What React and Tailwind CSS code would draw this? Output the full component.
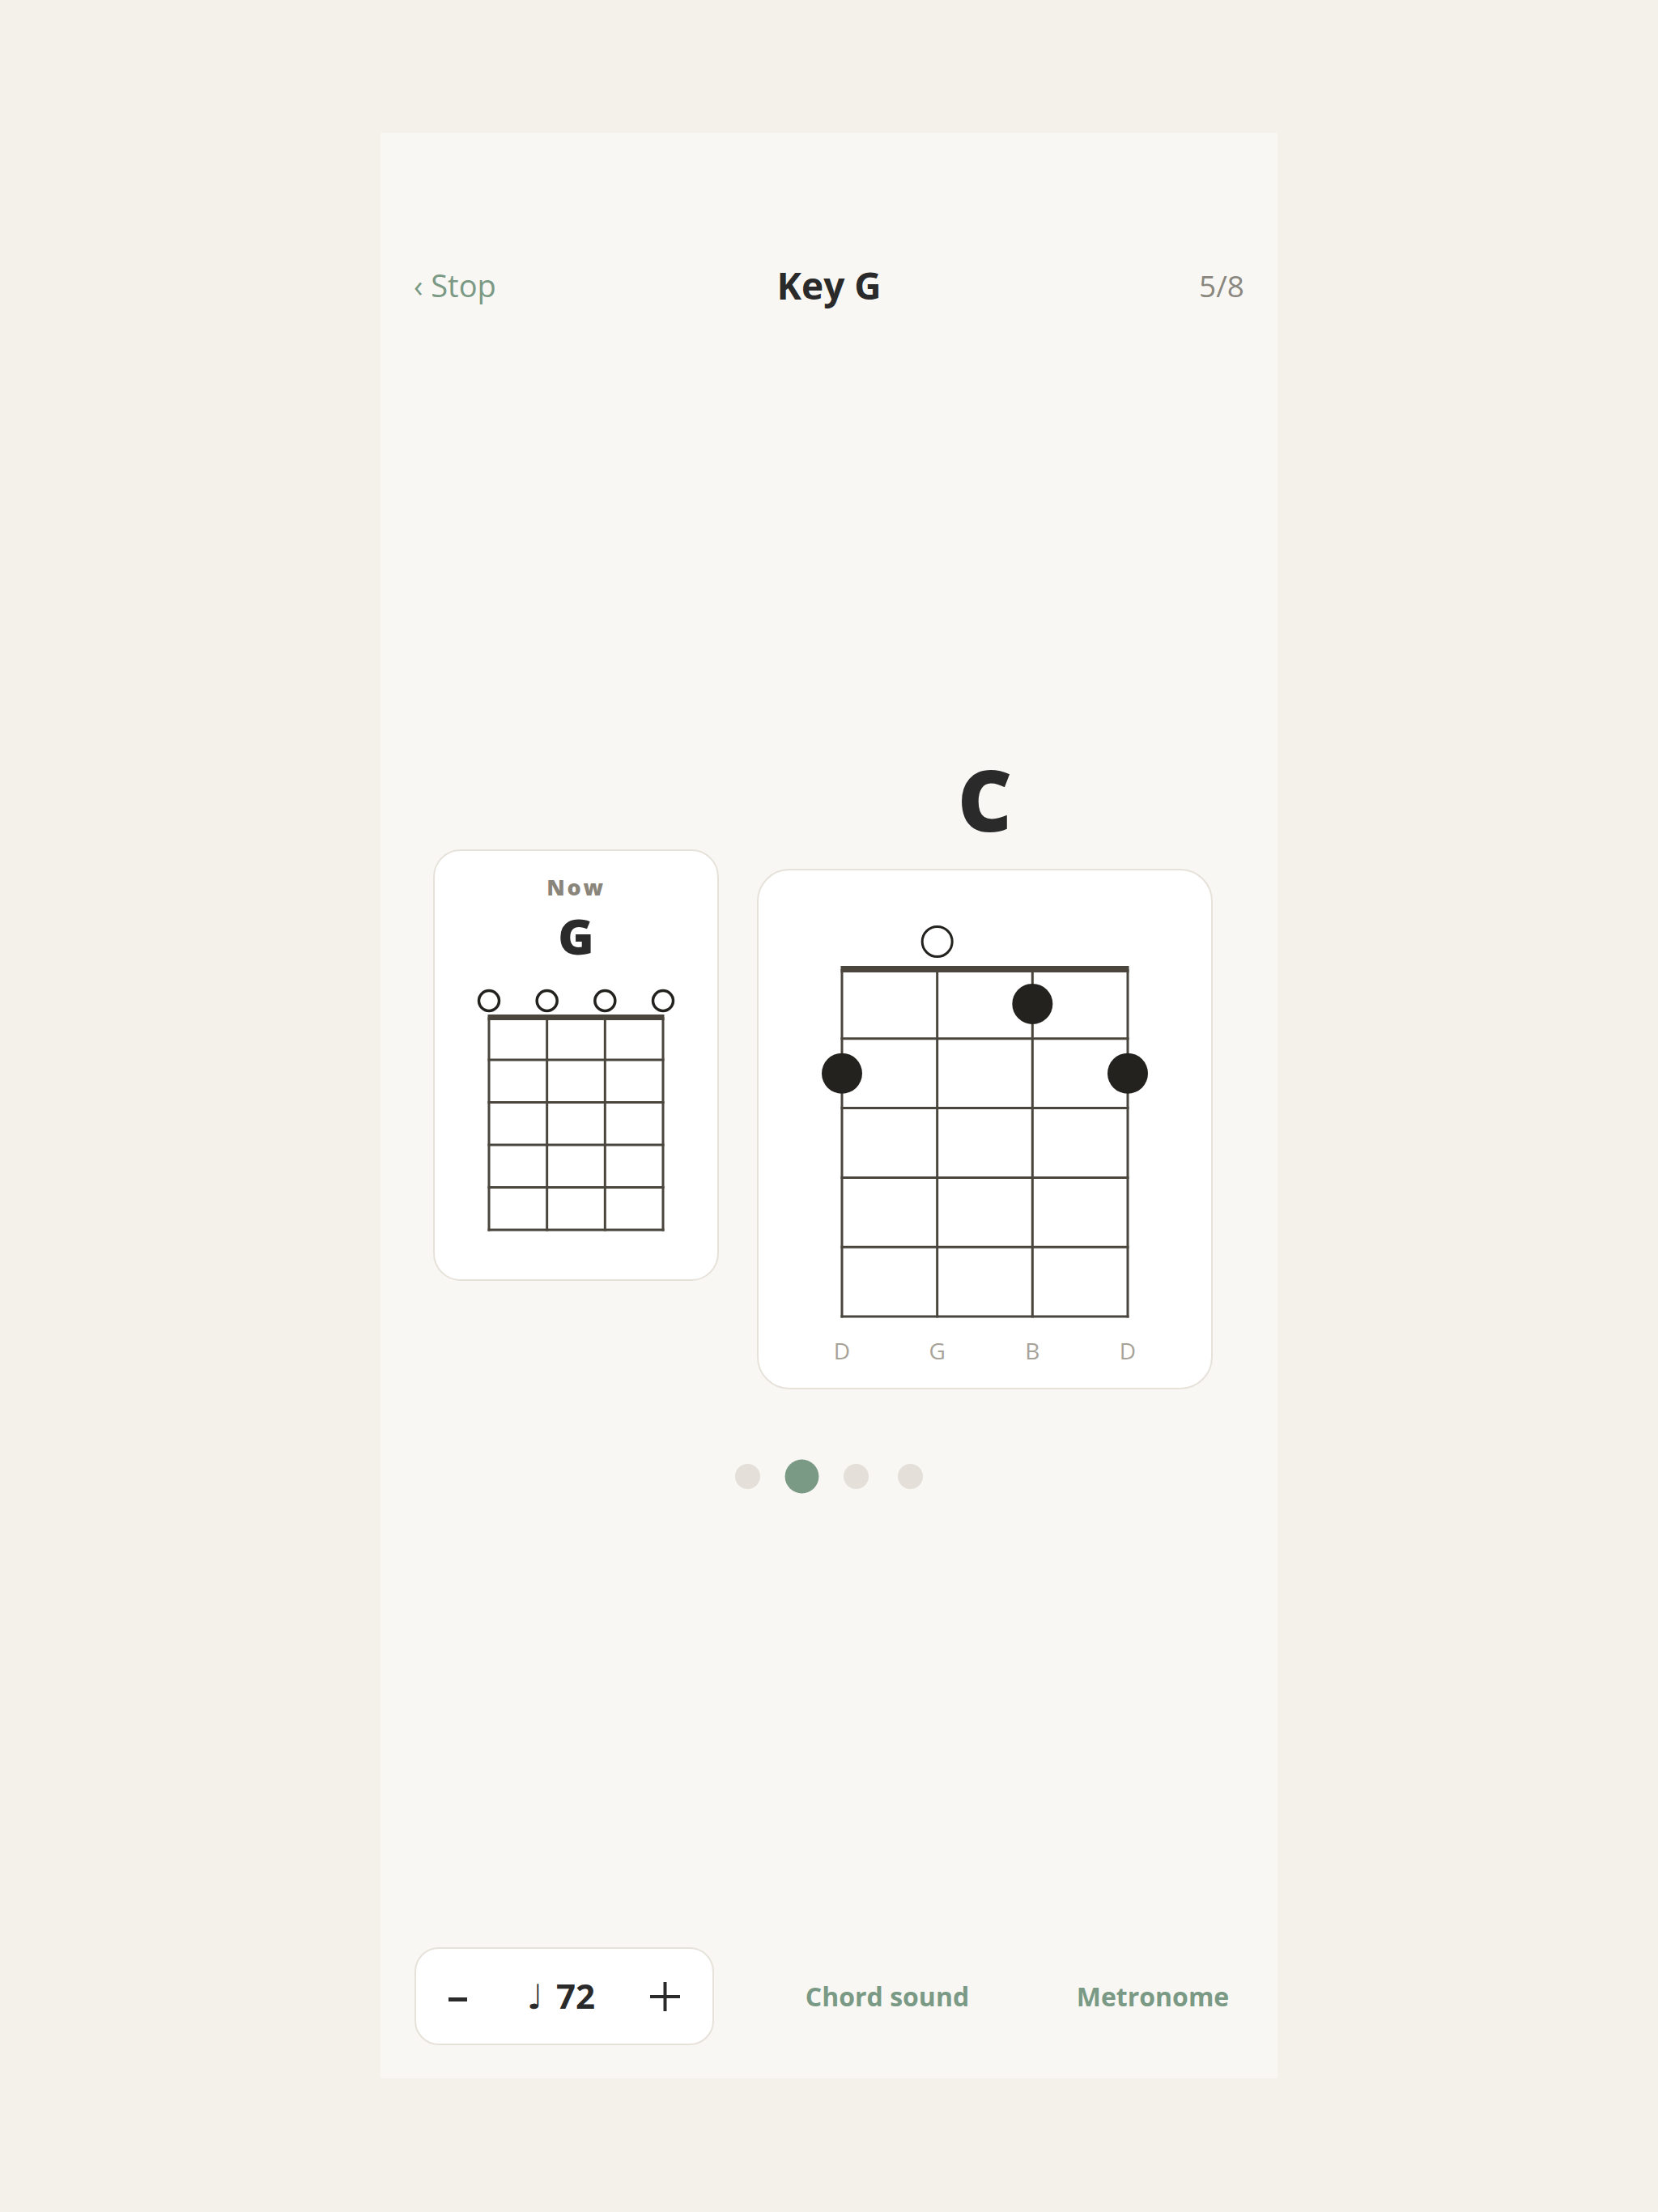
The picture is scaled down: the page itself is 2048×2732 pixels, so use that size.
import React from 'react';

const INK = '#4a463e';
const DOT = '#23221e';

// Ukulele fretboard drawing; xs = string x positions, top = y where strings start
const Fretboard = ({ w, h, xs, top, gap, nutY, nutH, openY, openR, openW, open = [], dots = [], dotR }) => {
    const bottom = top + gap * 5;
    return (
        <svg width={w} height={h} viewBox={`0 0 ${w} ${h}`} className="block">
            {[1, 2, 3, 4, 5].map(k => (
                <line key={k} x1={xs[0] - 1.5} x2={xs[3] + 1.5} y1={top + gap * k} y2={top + gap * k} stroke={INK} strokeWidth="3" />
            ))}
            {xs.map((x, i) => (
                <line key={i} x1={x} x2={x} y1={top} y2={bottom + 1.5} stroke={INK} strokeWidth="3" />
            ))}
            <rect x={xs[0] - 1.5} y={nutY} width={xs[3] - xs[0] + 3} height={nutH} fill={INK} />
            {open.map(i => (
                <circle key={i} cx={xs[i]} cy={openY} r={openR} fill="#fff" stroke={DOT} strokeWidth={openW} />
            ))}
            {dots.map(([s, f]) => (
                <circle key={s} cx={xs[s]} cy={top + gap * (f - 0.5)} r={dotR} fill={DOT} />
            ))}
        </svg>
    );
};

const App = () => {
    const dots = [false, true, false, false];

    return (
        <div className="min-h-[2732px] bg-[#f4f1ea] pt-[164px] font-['Open_Sans',sans-serif]">
            <div className="mx-auto w-[1108px] h-[2403px] bg-[#f8f7f3] flex flex-col pt-[165px] pb-[41px]">
                {/* Header */}
                <div className="grid grid-cols-[1fr_auto_1fr] items-center h-[46px] px-[41px]">
                    <div className="text-[38px] text-[#7a9a85] leading-none">‹ Stop</div>
                    <div className="text-[46px] font-bold text-[#2a2a2a] leading-none">Key G</div>
                    <div className="text-[37px] text-[#8a8780] leading-none text-right">5/8</div>
                </div>

                {/* Chords */}
                <div className="mt-[540px] flex items-center pl-[65px] gap-[47px]">
                    {/* current chord */}
                    <div className="w-[353px] bg-white border-2 border-[#e6e2da] rounded-[34px] flex flex-col items-center pt-[31px] pb-[57px]">
                        <div className="text-[27px] font-extrabold tracking-[0.1em] text-[#8a857b] leading-none">Now</div>
                        <div className="mt-[17px] text-[60px] font-extrabold text-[#2a2a2a] leading-none">G</div>
                        <div className="mt-[23px] w-full">
                            <Fretboard
                                w={349} h={314}
                                xs={[67, 138.67, 210.33, 282]}
                                top={47.5} gap={52.5}
                                nutY={44} nutH={7}
                                openY={27} openR={12.5} openW={3.5}
                                open={[0, 1, 2, 3]}
                            />
                        </div>
                    </div>

                    {/* next chord */}
                    <div className="flex flex-col items-center">
                        <div className="text-[104px] font-extrabold text-[#2a2a2a] leading-[143px] mb-[15px]">C</div>
                        <div className="w-[563px] bg-white border-2 border-[#e6e2da] rounded-[40px] flex flex-col items-center pb-[28px]">
                            <Fretboard
                                w={559} h={556}
                                xs={[103, 220.67, 338.33, 456]}
                                top={122} gap={85.8}
                                nutY={118} nutH={8}
                                openY={88} openR={18.5} openW={3}
                                open={[1]}
                                dots={[[2, 1], [0, 2], [3, 2]]}
                                dotR={25}
                            />
                            <div className="mt-[19px] h-[36px] w-[393px] flex justify-between items-center text-[28px] text-[#a8a399] leading-none">
                                {['D', 'G', 'B', 'D'].map((s, i) => (
                                    <span key={i} className="w-[40px] text-center">{s}</span>
                                ))}
                            </div>
                        </div>
                    </div>
                </div>

                {/* Pager dots */}
                <div className="mt-[92px] flex justify-center gap-[36px]">
                    {dots.map((on, i) => (
                        <div
                            key={i}
                            className={`w-[31px] h-[31px] rounded-full ${on ? 'bg-[#7a9a85] scale-[1.35]' : 'bg-[#e4dfd8]'}`}
                        />
                    ))}
                </div>

                {/* Bottom controls */}
                <div className="mt-auto flex items-center pl-[42px]">
                    <div className="shrink-0 w-[370px] h-[121px] bg-white border-2 border-[#e6e2da] rounded-[30px] flex items-center justify-between px-[40px]">
                        <svg width="23" height="6" viewBox="0 0 23 6" className="mt-[8px]">
                            <rect x="0" y="0" width="23" height="5" fill="#2a2a2a" />
                        </svg>
                        <div className="flex items-baseline gap-[16px] text-[#2a2a2a] pl-[6px]">
                            <span className="text-[42px] leading-none font-['DejaVu_Sans',sans-serif]">♩</span>
                            <span className="text-[42px] leading-none font-bold">72</span>
                        </div>
                        <svg width="37" height="36" viewBox="0 0 37 36">
                            <rect x="0" y="16" width="37" height="4" fill="#2a2a2a" />
                            <rect x="16.5" y="0" width="4" height="36" fill="#2a2a2a" />
                        </svg>
                    </div>
                    <button className="shrink-0 ml-[94px] w-[240px] text-center text-[32px] font-bold text-[#7a9a85] leading-none">Chord sound</button>
                    <button className="shrink-0 ml-[88px] w-[240px] text-center text-[32px] font-bold text-[#7a9a85] leading-none">Metronome</button>
                </div>
            </div>
        </div>
    );
};

export default App;
